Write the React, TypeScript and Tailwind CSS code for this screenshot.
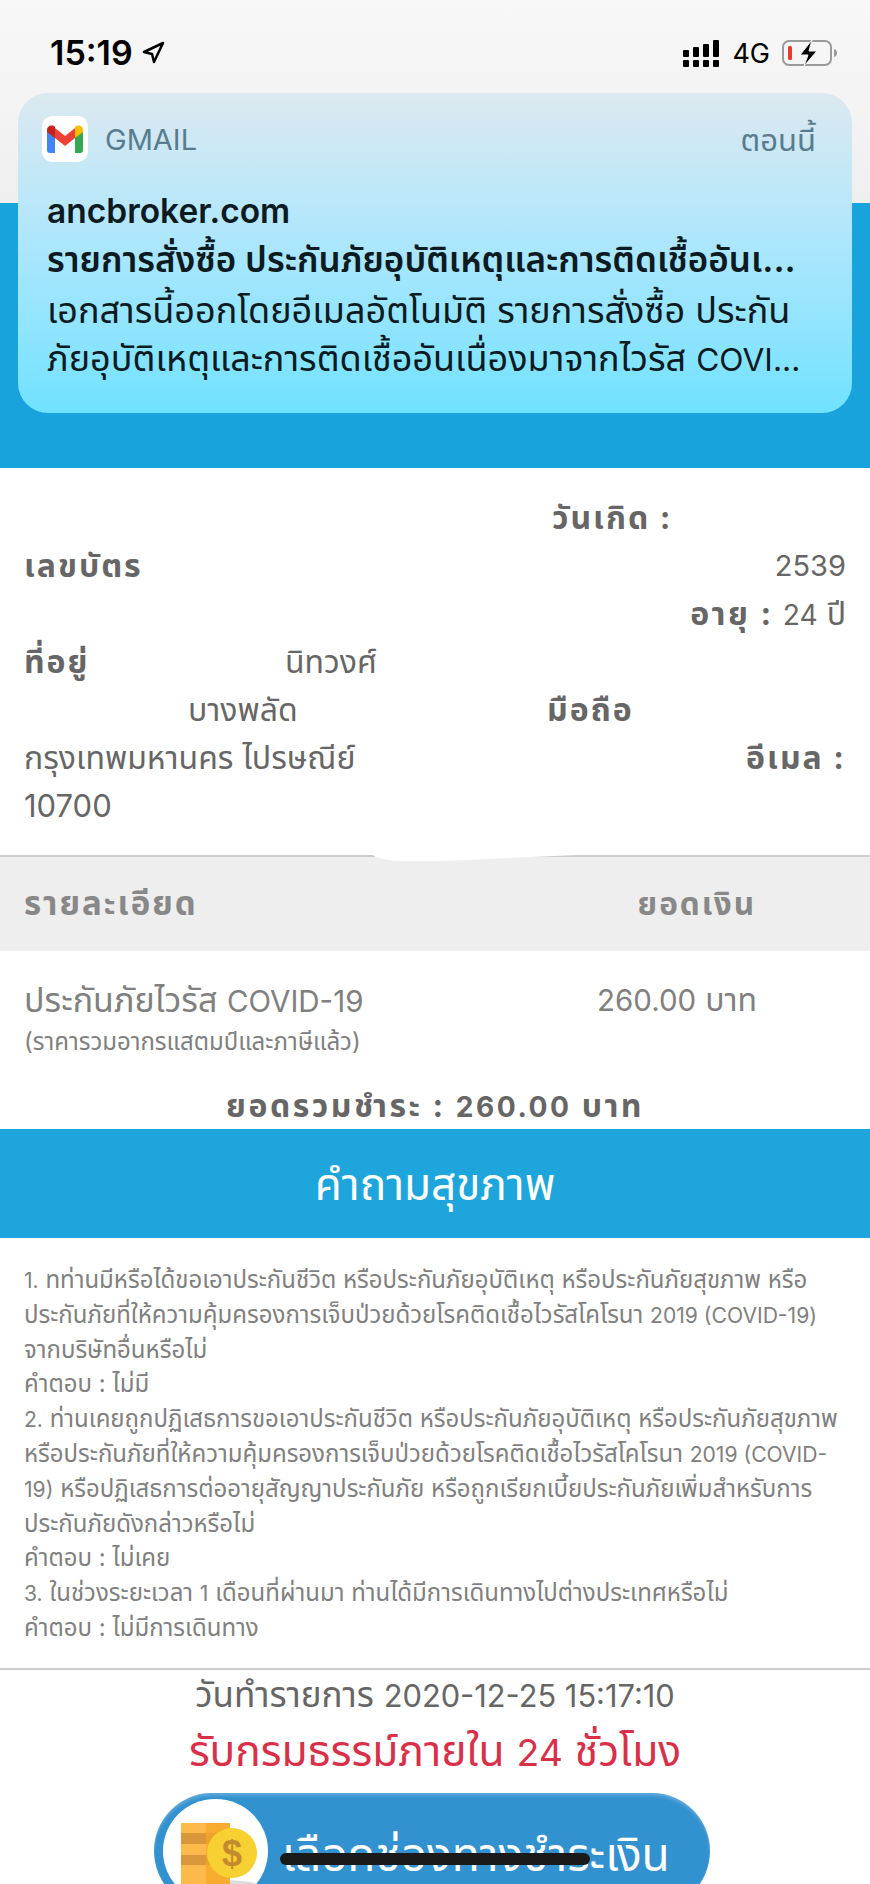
import type { ReactNode } from "react";
import { Navigation } from "lucide-react";

// thai glyphs run narrower than the reference, latin stays a bit smaller
function L({ children }: { children: ReactNode }) {
  return <span className="text-[0.88em] leading-none">{children}</span>;
}

const questions: ReactNode[] = [
  <><L>1.</L> ทท่านมีหรือได้ขอเอาประกันชีวิต หรือประกันภัยอุบัติเหตุ หรือประกันภัยสุขภาพ หรือ</>,
  <>ประกันภัยที่ให้ความคุ้มครองการเจ็บป่วยด้วยโรคติดเชื้อไวรัสโคโรนา <L>2019 (COVID-19)</L></>,
  <>จากบริษัทอื่นหรือไม่</>,
  <>คำตอบ : ไม่มี</>,
  <><L>2.</L> ท่านเคยถูกปฏิเสธการขอเอาประกันชีวิต หรือประกันภัยอุบัติเหตุ หรือประกันภัยสุขภาพ</>,
  <>หรือประกันภัยที่ให้ความคุ้มครองการเจ็บป่วยด้วยโรคติดเชื้อไวรัสโคโรนา <L>2019 (COVID-</L></>,
  <><L>19)</L> หรือปฏิเสธการต่ออายุสัญญาประกันภัย หรือถูกเรียกเบี้ยประกันภัยเพิ่มสำหรับการ</>,
  <>ประกันภัยดังกล่าวหรือไม่</>,
  <>คำตอบ : ไม่เคย</>,
  <><L>3.</L> ในช่วงระยะเวลา <L>1</L> เดือนที่ผ่านมา ท่านได้มีการเดินทางไปต่างประเทศหรือไม่</>,
  <>คำตอบ : ไม่มีการเดินทาง</>,
];

function GmailIcon() {
  return (
    <div className="flex h-[46px] w-[46px] shrink-0 items-center justify-center rounded-[10px] bg-white">
      <svg width="36" height="28" viewBox="0 0 36 28">
        <path d="M0 5v20a3 3 0 0 0 3 3h5V12z" fill="#4285f4" />
        <path d="M36 5v20a3 3 0 0 1-3 3h-5V12z" fill="#34a853" />
        <path d="M8 3 18 11 28 3v10l-10 8L8 13z" fill="#ea4335" />
        <path d="M0 5c0-4 5-6 8-3v11L0 7z" fill="#c5221f" />
        <path d="M36 5c0-4-5-6-8-3v11l8-6z" fill="#fbbc04" />
      </svg>
    </div>
  );
}

function StatusIcons() {
  return (
    <div className="flex items-center gap-[10px]">
      <svg className="mr-[3px]" width="36" height="27" viewBox="0 0 36 27" fill="#000">
        <rect x="0" y="10" width="6" height="7" rx="1" />
        <rect x="10" y="7" width="6" height="10" rx="1" />
        <rect x="20" y="4" width="6" height="13" rx="1" />
        <rect x="30" y="0" width="6" height="17" rx="1" />
        <rect x="0" y="20" width="6" height="7" rx="1" />
        <rect x="10" y="20" width="6" height="7" rx="1" />
        <rect x="20" y="20" width="6" height="7" rx="1" />
        <rect x="30" y="20" width="6" height="7" rx="1" />
      </svg>
      <span className="mr-[2px] text-[27px] leading-none text-black">4G</span>
      <svg width="56" height="28" viewBox="0 0 56 28" fill="none">
        <rect x="1" y="2" width="48" height="24" rx="6" stroke="#9a9a9a" strokeWidth="2" />
        <rect x="6" y="7" width="4" height="14" rx="1.5" fill="#ec3a30" />
        <path d="M52 10c2 .5 3 2 3 4s-1 3.500-3 4z" fill="#9a9a9a" />
        <path d="M30 1 18 16h8l-4 11 13-15h-8z" fill="#000" stroke="#f5f5f5" strokeWidth="1" />
      </svg>
    </div>
  );
}

function CoinIcon() {
  return (
    <svg width="86" height="70" viewBox="0 0 86 70">
      <ellipse cx="44" cy="63" rx="40" ry="6" fill="#dcdcdc" />
      <rect x="5" y="0" width="49" height="10" fill="#fdb94a" />
      <rect x="5" y="10" width="49" height="11" fill="#d9973a" />
      <rect x="5" y="21" width="49" height="11" fill="#fdb94a" />
      <rect x="5" y="32" width="49" height="10" fill="#d9973a" />
      <rect x="5" y="42" width="49" height="20" fill="#fdb94a" />
      <rect x="30" y="0" width="24" height="62" fill="#f5a623" opacity="0.7" />
      <circle cx="56" cy="30" r="25" fill="#f7d032" />
      <text
        x="56"
        y="43"
        textAnchor="middle"
        fontSize="36"
        fontWeight="700"
        fill="#c48a2e"
        fontFamily="'Liberation Sans', sans-serif"
      >
        $
      </text>
    </svg>
  );
}

export default function App() {
  return (
    <div className="relative h-[1884px] w-[870px] overflow-hidden bg-white font-['Inter','Noto_Sans','Noto_Sans_Thai',sans-serif] text-[32px] text-[#666]">
      <div className="h-[203px] bg-gradient-to-b from-[#f8f8f8] to-[#efefef]" />
      <div className="h-[265px] bg-[#18a3dc]" />

      {/* status bar */}
      <div className="absolute left-[50px] right-[32px] top-[36px] flex items-center justify-between">
        <div className="flex items-center gap-[8px] text-[34px] font-semibold leading-none text-black">
          15:19
          <Navigation size={24} strokeWidth={2.5} />
        </div>
        <StatusIcons />
      </div>

      {/* notification */}
      <div className="absolute left-[18px] top-[93px] h-[320px] w-[834px] rounded-[30px] bg-gradient-to-b from-[#dce9f0] via-[#a9e6fd] to-[#6fe2ff] px-[24px] pt-[23px]">
        <div className="flex items-center gap-[17px]">
          <GmailIcon />
          <span className="text-[29px] leading-none text-[#587c8e]">GMAIL</span>
          <span className="ml-auto pr-[12px] text-[31px] leading-none text-[#587c8e]">ตอนนี้</span>
        </div>
        <div className="mt-[25px] pl-[5px] text-[35px] leading-[48px] text-[#0c1a22]">
          <div className="text-[33.500px] font-semibold">ancbroker.com</div>
          <div className="whitespace-nowrap font-semibold">รายการสั่งซื้อ ประกันภัยอุบัติเหตุและการติดเชื้ออันเ...</div>
          <div className="mt-[3px] whitespace-nowrap text-[36px]">เอกสารนี้ออกโดยอีเมลอัตโนมัติ รายการสั่งซื้อ ประกัน</div>
          <div className="whitespace-nowrap text-[36px]">ภัยอุบัติเหตุและการติดเชื้ออันเนื่องมาจากไวรัส <L>COVI...</L></div>
        </div>
      </div>

      {/* customer details */}
      <div className="h-[387px] px-[24px] pt-[26px] leading-[48px]">
        <div className="pl-[528px] font-bold tracking-[2px]">วันเกิด :</div>
        <div className="flex justify-between">
          <span className="font-bold tracking-[2px]">เลขบัตร</span>
          <span className="text-[29px]">2539</span>
        </div>
        <div className="text-right">
          <span className="font-bold tracking-[2.500px]">อายุ :</span> <L>24</L> ปี
        </div>
        <div className="flex">
          <span className="w-[261px] font-bold tracking-[2px]">ที่อยู่</span>
          <span>นิทวงศ์</span>
        </div>
        <div className="flex">
          <span className="w-[523px] pl-[164px]">บางพลัด</span>
          <span className="font-bold tracking-[2px]">มือถือ</span>
        </div>
        <div className="flex justify-between">
          <span>กรุงเทพมหานคร ไปรษณีย์</span>
          <span className="font-bold tracking-[2px]">อีเมล :</span>
        </div>
        <div className="text-[31px]">10700</div>
      </div>

      {/* table */}
      <div className="relative flex h-[96px] items-center justify-between border-t-2 border-[#cccccc] bg-[#eeeeee] pl-[24px] pr-[114px] font-bold tracking-[2px] text-[#888]">
        <span className="text-[33px]">รายละเอียด</span>
        <span className="text-[31.500px]">ยอดเงิน</span>
        <svg className="absolute left-[373px] top-[-2px]" width="205" height="6" viewBox="0 0 205 6">
          <path d="M0 0Q6 5 28 6L70 6 205 0z" fill="#fff" />
        </svg>
      </div>
      <div className="flex items-start justify-between pl-[24px] pr-[113px] pt-[24px] text-[34px] leading-[50px] text-[#808080]">
        <span>ประกันภัยไวรัส <span className="text-[29.500px] leading-none">COVID-19</span></span>
        <span className="text-[32px]"><span className="text-[29.500px] leading-none">260.00</span> บาท</span>
      </div>
      <div className="pl-[24px] pt-[2px] text-[24px] leading-[30px] text-[#808080]">(ราคารวมอากรแสตมป์และภาษีแล้ว)</div>
      <div className="mt-[29px] text-center font-bold leading-[40px] tracking-[2.500px] text-[#666]">
        ยอดรวมชำระ : <L>260.00</L> บาท
      </div>

      {/* health questions */}
      <div className="mt-[3px] flex h-[109px] items-center justify-center bg-[#1ea6dc] text-[44px] text-white">
        คำถามสุขภาพ
      </div>
      <div className="h-[430px] whitespace-nowrap px-[24px] pt-[25px] text-[24px] leading-[34.800px] text-[#808080]">
        {questions.map((line, i) => (
          <div key={i}>{line}</div>
        ))}
      </div>

      {/* footer */}
      <div className="border-t-2 border-[#cccccc] pt-[1px] text-center">
        <div className="text-[35px] leading-[46px] text-[#666]"><span>วันทำรายการ</span> <L>2020-12-25 15:17:10</L></div>
        <div className="mt-[6px] text-[42.500px] leading-[56px] text-[#d9304a]">รับกรมธรรม์ภายใน <L>24</L> ชั่วโมง</div>
      </div>
      <div className="ml-[154px] mt-[14px] flex h-[116px] w-[556px] items-center gap-[14px] rounded-full bg-[#3291cf] pl-[9px] shadow-[inset_0_3px_3px_rgba(255,255,255,0.2)]">
        <div className="flex h-[104px] w-[105px] shrink-0 items-center justify-center rounded-full bg-white pl-[6px] pt-[14px]">
          <CoinIcon />
        </div>
        <span className="pt-[6px] text-[46px] leading-none text-white">เลือกช่องทางชำระเงิน</span>
      </div>

      {/* home indicator */}
      <div className="absolute left-[280px] top-[1853px] h-[12px] w-[310px] rounded-full bg-[#1a1a1a]" />
    </div>
  );
}
